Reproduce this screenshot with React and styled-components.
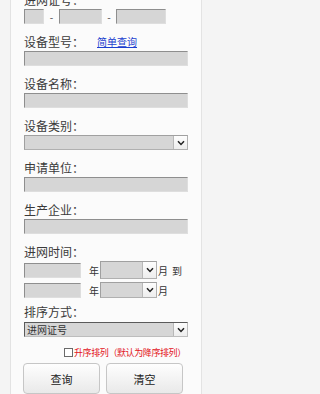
import React from 'react';
import styled, { createGlobalStyle } from 'styled-components';

const Global = createGlobalStyle`
  html, body { margin: 0; padding: 0; background: #f4f4f4; }
  body { font-family: "Noto Sans CJK SC", "Noto Sans", sans-serif; overflow: hidden; }
`;

const Page = styled.div`
  width: 211px;
  height: 394px;
  overflow: hidden;
  padding-left: 10px;
  box-sizing: border-box;
`;

const Panel = styled.div`
  width: 192px;
  min-height: 440px;
  box-sizing: border-box;
  margin-top: -20px;
  padding: 12px 0 0 13px;
  background: #fbfbfb;
  border-left: 1px solid #e3e3e3;
  border-right: 1px solid #e3e3e3;
`;

const Group = styled.div`
  margin-bottom: ${p => p.$mb ?? 10}px;
`;

const Label = styled.div`
  height: 16px;
  line-height: 16px;
  font-size: 12px;
  color: #3a3a3a;
  display: flex;
  align-items: center;
  margin-bottom: ${p => p.$mb ?? 1}px;
  white-space: nowrap;
`;

const Link = styled.a`
  font-size: 10px;
  color: #1c3fcf;
  text-decoration: underline;
  margin-left: 13px;
  cursor: pointer;
`;

const Row = styled.div`
  display: flex;
  align-items: center;
  height: ${p => p.$h ?? 15}px;
  margin-bottom: ${p => p.$mb ?? 0}px;
`;

const Field = styled.div`
  width: ${p => p.$w ?? 164}px;
  height: 15px;
  box-sizing: border-box;
  background: #d6d6d6;
  border: 1px solid;
  border-color: #8e8e8e #dedede #dedede #8e8e8e;
  flex: none;
`;

const Dash = styled.span`
  width: ${p => p.$w}px;
  text-align: center;
  font-size: 10px;
  color: #444;
  flex: none;
`;

const Unit = styled.span`
  font-size: 10px;
  color: #333;
  padding-left: ${p => p.$pl ?? 0}px;
  width: ${p => (p.$w ? `${p.$w}px` : 'auto')};
  flex: none;
  box-sizing: border-box;
`;

const Select = styled.div`
  width: ${p => p.$w ?? 164}px;
  height: ${p => p.$h ?? 15}px;
  box-sizing: border-box;
  display: flex;
  background: #d6d6d6;
  border: 1px solid;
  border-color: ${p => (p.$dark ? '#5a5a5a #bdbdbd #bdbdbd #5a5a5a' : '#a0a0a0 #b0b0b0 #b0b0b0 #a0a0a0')};
  flex: none;
`;

const SelectValue = styled.div`
  flex: 1;
  display: flex;
  align-items: center;
  font-size: 10px;
  line-height: 1;
  color: #333;
  padding-left: 2px;
  white-space: nowrap;
`;

const SelectBtn = styled.div`
  width: 13px;
  flex: none;
  display: flex;
  align-items: center;
  justify-content: center;
  background: linear-gradient(#fdfdfd, #ededed);
  border-left: 1px solid #b8b8b8;
`;

const CheckRow = styled.div`
  display: flex;
  align-items: center;
  height: 14px;
  padding-left: 40px;
  margin: 8px 0 4px;
`;

const Box = styled.span`
  width: 9px;
  height: 9px;
  box-sizing: border-box;
  border: 1px solid #6a6a6a;
  background: #fff;
  margin-right: 1px;
  flex: none;
`;

const Hint = styled.span`
  font-size: 9px;
  letter-spacing: -0.4px;
  color: #e3141c;
  white-space: nowrap;
`;

const Buttons = styled.div`
  display: flex;
  gap: 6px;
  margin-left: -1px;
`;

const Button = styled.button`
  width: 77px;
  height: 31px;
  border: 1px solid #c6c6c6;
  border-radius: 4px;
  background: linear-gradient(#fefefe, #e9e9e9);
  font-family: "Noto Sans CJK SC", sans-serif;
  font-size: 11px;
  color: #222;
  padding: 0;
`;

const Chevron = () => (
  <svg width="8" height="6" viewBox="0 0 8 6">
    <path d="M1 1.2 L4 4.4 L7 1.2" fill="none" stroke="#222" strokeWidth="1.5" />
  </svg>
);

const Dropdown = ({ w, h, dark, value }) => (
  <Select $w={w} $h={h} $dark={dark}>
    <SelectValue>{value}</SelectValue>
    <SelectBtn>
      <Chevron />
    </SelectBtn>
  </Select>
);

export default function App() {
  return (
    <Page>
      <Global />
      <Panel>
        <Group>
          <Label>进网证号：</Label>
          <Row>
            <Field $w={20} />
            <Dash $w={15}>-</Dash>
            <Field $w={43} />
            <Dash $w={14}>-</Dash>
            <Field $w={50} />
          </Row>
        </Group>
        <Group>
          <Label>
            设备型号：<Link>简单查询</Link>
          </Label>
          <Field />
        </Group>
        <Group>
          <Label>设备名称：</Label>
          <Field />
        </Group>
        <Group>
          <Label>设备类别：</Label>
          <Dropdown />
        </Group>
        <Group>
          <Label>申请单位：</Label>
          <Field />
        </Group>
        <Group>
          <Label>生产企业：</Label>
          <Field />
        </Group>
        <Group $mb={6}>
          <Label>进网时间：</Label>
          <Row $h={18} $mb={3}>
            <Field $w={57} />
            <Unit $w={19} $pl={8}>年</Unit>
            <Dropdown w={57} h={18} />
            <Unit $pl={1}>月</Unit>
            <Unit $pl={4}>到</Unit>
          </Row>
          <Row $h={16}>
            <Field $w={57} />
            <Unit $w={19} $pl={8}>年</Unit>
            <Dropdown w={57} h={16} />
            <Unit $pl={1}>月</Unit>
          </Row>
        </Group>
        <Label $mb={2}>排序方式：</Label>
        <Dropdown dark value="进网证号" />
        <CheckRow>
          <Box />
          <Hint>升序排列（默认为降序排列）</Hint>
        </CheckRow>
        <Buttons>
          <Button>查询</Button>
          <Button>清空</Button>
        </Buttons>
      </Panel>
    </Page>
  );
}
